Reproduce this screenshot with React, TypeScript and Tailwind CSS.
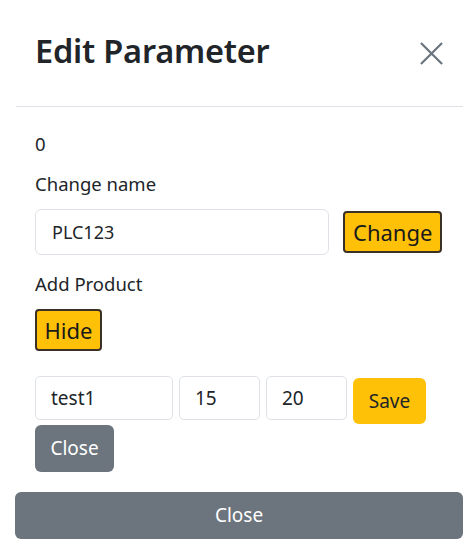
import React from "react";

export default function App() {
  return (
    <div
      className="w-[475px] h-[555px] bg-white text-[#212529] overflow-hidden"
      style={{ fontFamily: '"Noto Sans", "Open Sans", sans-serif' }}
    >
      <div className="ml-4 mr-[12px] h-[107px] border-b border-[#dee2e6] flex items-center justify-between pl-[19px] pr-[18px]">
        <h1 className="text-[32.5px] font-semibold leading-none tracking-[-0.2px] -mt-[4px]">Edit Parameter</h1>
        <svg width="27" height="27" viewBox="0 0 16 16" aria-label="close">
          <path d="M2.2 2.2 L13.8 13.8 M13.8 2.2 L2.2 13.8" stroke="#6c757d" strokeWidth="1.3" strokeLinecap="square" fill="none" />
        </svg>
      </div>

      <div className="pl-[35px] pr-[32px] pt-[23px]">
        <div className="text-[18.5px] leading-[27px]">0</div>
        <div className="text-[18.5px] leading-[27px] mt-[13px]">Change name</div>
        <div className="flex items-center gap-[14px] mt-[12px]">
          <input
            readOnly
            value="PLC123"
            className="w-[294px] h-[46px] border border-[#dee2e6] rounded-[6px] px-[16px] text-[18px] text-[#212529] outline-none"
          />
          <button className="h-[42px] px-[8px] bg-[#ffc107] border-2 border-[#3a3026] rounded-[4px] text-[22px] leading-none text-[#1a1a1a]">
            Change
          </button>
        </div>
        <div className="text-[18.5px] leading-[27px] mt-[15px]">Add Product</div>
        <div className="mt-[12px]">
          <button className="h-[42px] w-[67px] bg-[#ffc107] border-2 border-[#3a3026] rounded-[4px] text-[22px] leading-none text-[#1a1a1a]">
            Hide
          </button>
        </div>
        <div className="flex items-start gap-[6px] mt-[25px]">
          <input
            readOnly
            value="test1"
            className="w-[138px] h-[44px] border border-[#dee2e6] rounded-[5px] px-[15px] text-[19px] text-[#212529] outline-none"
          />
          <input
            readOnly
            value="15"
            className="w-[81px] h-[44px] border border-[#dee2e6] rounded-[5px] px-[15px] text-[19px] text-[#212529] outline-none"
          />
          <input
            readOnly
            value="20"
            className="w-[81px] h-[44px] border border-[#dee2e6] rounded-[5px] px-[15px] text-[19px] text-[#212529] outline-none"
          />
          <button className="mt-[2px] w-[73px] h-[46px] bg-[#ffc107] rounded-[6px] text-[19px] text-[#212529]">
            Save
          </button>
        </div>
        <div className="mt-[1px]">
          <button className="w-[79px] h-[47px] bg-[#6c757d] rounded-[6px] text-[19px] text-white">
            Close
          </button>
        </div>
      </div>

      <div className="px-[15px] mt-[20px]">
        <button className="w-[448px] h-[47px] bg-[#6c757d] rounded-[6px] text-[19px] text-white">
          Close
        </button>
      </div>
    </div>
  );
}
